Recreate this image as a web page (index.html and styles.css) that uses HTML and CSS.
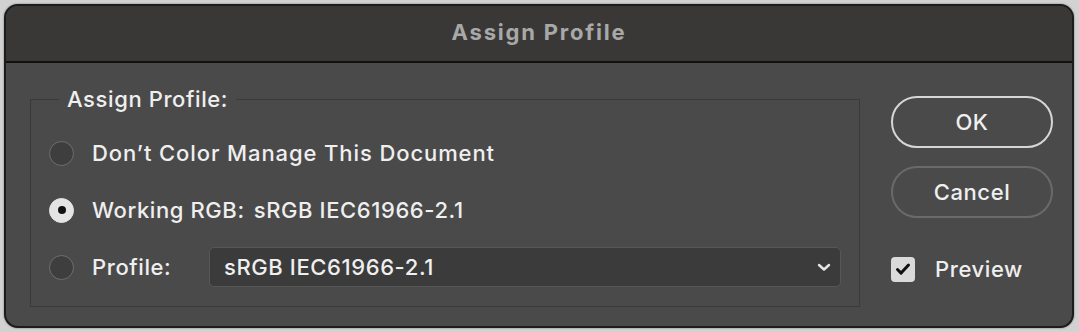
FILE: index.html
```html
<!DOCTYPE html>
<html lang="en">
<head>
    <meta charset="UTF-8">
    <meta name="viewport" content="width=device-width, initial-scale=1.0">
    <title>Assign Profile</title>
    <link rel="stylesheet" href="styles.css">
</head>
<body>
    <div class="dialog">
        <div class="titlebar">Assign Profile</div>

        <div class="content">
            <fieldset class="group">
                <legend>Assign Profile:</legend>
                <div class="options">
                    <label class="option">
                        <span class="radio"></span>
                        <span class="wide">Don’t Color Manage This Document</span>
                    </label>
                    <label class="option">
                        <span class="radio checked"></span>
                        Working RGB:<span class="working">sRGB IEC61966-2.1</span>
                    </label>
                    <div class="option">
                        <span class="radio"></span>
                        <span class="profile-label">Profile:</span>
                        <div class="select">
                            <span>sRGB IEC61966-2.1</span>
                            <svg class="chevron" width="14" height="9" viewBox="0 0 14 9">
                                <path d="M2 2l5 4.5L12 2" fill="none" stroke="#e6e6e6" stroke-width="2.4" stroke-linecap="round" stroke-linejoin="round"/>
                            </svg>
                        </div>
                    </div>
                </div>
            </fieldset>

            <div class="actions">
                <button class="btn btn-default">OK</button>
                <button class="btn">Cancel</button>
                <label class="check">
                    <span class="checkbox">
                        <svg width="18" height="16" viewBox="0 0 18 16">
                            <path d="M3.5 8.5l3.6 3.6L14.5 4" fill="none" stroke="#111" stroke-width="3" stroke-linecap="round" stroke-linejoin="round"/>
                        </svg>
                    </span>
                    Preview
                </label>
            </div>
        </div>
    </div>
</body>
</html>
```

FILE: styles.css
```css
body {
    margin: 0;
    padding: 4px 5px 4px 4px;
    background-color: #d2d2d2;
    font-family: Inter, "Liberation Sans", Arial, sans-serif;
    font-weight: 500;
    letter-spacing: 0.6px;
    color: #efefef;
}
.dialog {
    height: 320px;
    border: 2px solid #1c1c1c;
    border-radius: 14px;
    background-color: #4a4a4a;
    overflow: hidden;
    box-shadow: 0 0 2px rgba(0, 0, 0, 0.5);
}
.titlebar {
    height: 55px;
    line-height: 52px;
    text-align: center;
    font-size: 22px;
    font-weight: bold;
    letter-spacing: 1.8px;
    color: #a8a8a8;
    background-color: #393836;
    border-bottom: 2px solid #111;
}
.content {
    display: flex;
    gap: 31px;
    padding: 24px 19px 19px 24px;
    height: 220px;
}
.group {
    flex: 1;
    margin: 0;
    padding: 0 18px 18px;
    border: 1px solid #3a3a3a;
    min-width: 0;
}
.group legend {
    margin-left: 10px;
    padding: 0 8px;
    font-size: 22px;
    line-height: 24px;
}
.options {
    display: flex;
    flex-direction: column;
    gap: 17px;
    padding-top: 22px;
}
.option {
    display: flex;
    align-items: center;
    height: 40px;
    font-size: 22px;
}
.wide {
    letter-spacing: 0.9px;
}
.radio {
    width: 23px;
    height: 23px;
    margin-right: 18px;
    border: 1.5px solid #6e6e6e;
    border-radius: 50%;
    background-color: #3e3e3e;
    flex-shrink: 0;
    display: flex;
    align-items: center;
    justify-content: center;
}
.radio.checked {
    background-color: #e4e4e4;
    border-color: #e4e4e4;
}
.radio.checked::after {
    content: "";
    width: 8px;
    height: 8px;
    border-radius: 50%;
    background-color: #111;
}
.working {
    margin-left: 9px;
}
.profile-label {
    width: 117px;
}
.select {
    flex: 1;
    height: 38px;
    display: flex;
    align-items: center;
    justify-content: space-between;
    padding: 0 9px 0 14px;
    background-color: #3b3b3b;
    border: 1px solid #575757;
    border-radius: 5px;
}
.actions {
    width: 162px;
    display: flex;
    flex-direction: column;
    gap: 18px;
    margin-top: 9px;
}
.btn {
    height: 52px;
    font-family: inherit;
    font-weight: 500;
    letter-spacing: 0.6px;
    font-size: 22px;
    color: #efefef;
    background-color: transparent;
    border: 2px solid #6a6a6a;
    border-radius: 26px;
}
.btn-default {
    border-color: #d6d6d6;
}
.check {
    display: flex;
    align-items: center;
    margin-top: 20px;
    font-size: 22px;
}
.checkbox {
    width: 24px;
    height: 25px;
    margin-right: 20px;
    border-radius: 4px;
    background-color: #dadada;
    display: flex;
    align-items: center;
    justify-content: center;
}
```
